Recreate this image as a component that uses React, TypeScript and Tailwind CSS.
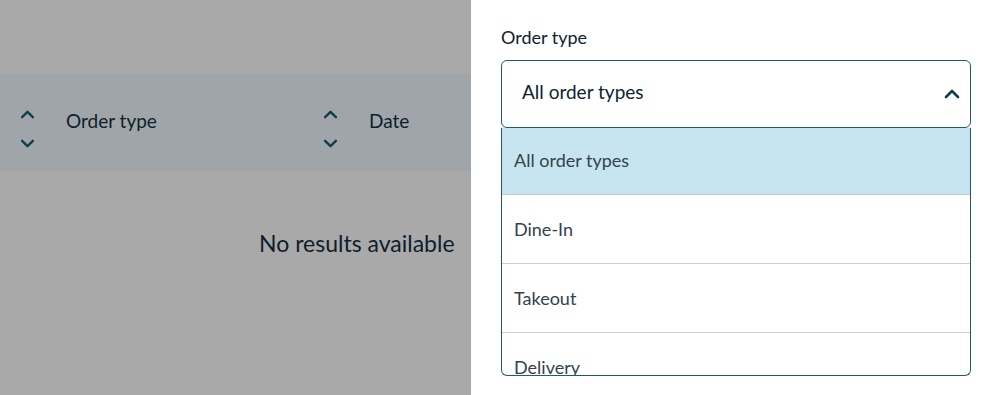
import React from 'react';

const Chevron = ({ up, className }: { up?: boolean; className?: string }) => (
  <svg viewBox="0 0 16 10" className={className} fill="none" stroke="currentColor" strokeWidth={2.6} strokeLinecap="round" strokeLinejoin="round">
    {up ? <path d="M2 8 L8 2 L14 8" /> : <path d="M2 2 L8 8 L14 2" />}
  </svg>
);

const SortIcon = () => (
  <div className="flex flex-col items-center gap-[20px] text-[#0f3e4c] mt-[12px]">
    <Chevron up className="w-[15px] h-[9px]" />
    <Chevron className="w-[15px] h-[9px]" />
  </div>
);

const options = ['All order types', 'Dine-In', 'Takeout', 'Delivery'];

export default function App() {
  return (
    <div className="w-[1000px] h-[395px] flex overflow-hidden bg-white" style={{ fontFamily: 'Lato, "Noto Sans", sans-serif' }}>
      {/* dimmed table behind the drawer */}
      <div className="w-[471px] shrink-0 bg-[#a9a9a9] flex flex-col">
        <div className="h-[74px]" />
        <div className="h-[97px] bg-[#9fa5a8] flex items-center">
          <div className="w-[303px] flex items-center pl-[20px] gap-[31px]">
            <SortIcon />
            <span className="text-[19px] text-[#0e1e2b] pb-[2px]">Order type</span>
          </div>
          <div className="flex items-center pl-[20px] gap-[31px]">
            <SortIcon />
            <span className="text-[19px] text-[#0e1e2b] pb-[2px]">Date</span>
          </div>
        </div>
        <div className="pl-[259px] pt-[55px] text-[23px] text-[#0e1e2b] whitespace-nowrap">No results available</div>
      </div>

      {/* filter drawer */}
      <div className="flex-1 bg-white pl-[30px] pr-[30px] pt-[25px]">
        <div className="text-[18px] text-[#0e2233] leading-[24px] mb-[11px]">Order type</div>
        <div className="w-[470px]">
          <div className="h-[68px] border border-[#1f5b6b] rounded-[6px] flex items-center justify-between pl-[20px] pr-[10px]">
            <span className="text-[19px] text-[#0e2233] pb-[4px]">All order types</span>
            <Chevron up className="w-[16px] h-[10px] text-[#0f3e4c]" />
          </div>
          <div className="h-[248px] border border-t-0 border-[#1f5b6b] rounded-b-[6px] overflow-hidden">
            {options.map((o, i) => (
              <div
                key={o}
                className={`flex items-center pl-[12px] text-[18px] text-[#34424c] ${i === 0 ? 'h-[67px] bg-[#c7e5f0] border-b border-[#c3c8cb] pb-[2px]' : 'h-[69px] border-b border-[#cfcfcf]'}`}
              >
                {o}
              </div>
            ))}
          </div>
        </div>
      </div>
    </div>
  );
}
